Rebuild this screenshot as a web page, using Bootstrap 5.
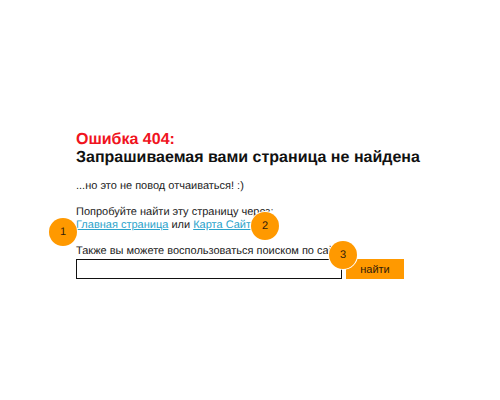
<!DOCTYPE html>
<html lang="ru">
<head>
<meta charset="utf-8">
<meta name="viewport" content="width=device-width, initial-scale=1">
<title>Ошибка 404</title>
<link rel="stylesheet" href="https://cdn.jsdelivr.net/npm/bootstrap@5.3.0/dist/css/bootstrap.min.css">
<style>
  body { font-family: "Liberation Sans", Arial, sans-serif; font-size: 11px; line-height: 13px; color: #1a1a1a; background: #fff; text-rendering: geometricPrecision; }
  .error-page { padding: 131px 48px 48px 76px; }
  .error-title { font-size: 16px; line-height: 18px; font-weight: 700; color: #111; margin-bottom: 13px; }
  .error-code { color: #f0141e; }
  .error-page p { margin-bottom: 13px; }
  .error-page a { color: #2ba3cb; }
  .search-label { margin-bottom: 1px; }
  .search-row { gap: 4px; }
  .search-row .form-control { height: 20px; padding: 0 4px; font-size: 11px; border: 1px solid #111; }
  .search-row .btn { width: 58px; height: 20px; padding: 0; font-size: 11px; line-height: 18px; color: #33200a; background: #ff9900; border: 0; }
  .marker { width: 28px; height: 28px; background: #ff9900; color: #33200a; box-shadow: 0 0 0 1px #fff; z-index: 5; }
  .marker-home { top: -1px; left: -27px; }
  .marker-map { top: -7px; right: -22px; }
  .marker-search { bottom: 10px; right: 47px; }
</style>
</head>
<body>
<main class="error-page">
  <h1 class="error-title"><span class="error-code d-block">Ошибка 404:</span>Запрашиваемая вами страница не найдена</h1>
  <p>...но это не повод отчаиваться! :)</p>
  <p>Попробуйте найти эту страницу через:<br>
    <span class="d-inline-block position-relative"><a href="#home">Главная страница</a><span class="marker marker-home position-absolute rounded-circle d-flex align-items-center justify-content-center">1</span></span>
    или
    <span class="d-inline-block position-relative"><a href="#map">Карта Сайта</a><span class="marker marker-map position-absolute rounded-circle d-flex align-items-center justify-content-center">2</span></span>
  </p>
  <form class="position-relative me-5" onsubmit="return false">
    <label for="query" class="search-label d-block">Также вы можете воспользоваться поиском по сайту</label>
    <div class="search-row d-flex">
      <input id="query" type="text" class="form-control rounded-0 shadow-none">
      <button type="submit" class="btn rounded-0 flex-shrink-0">найти</button>
    </div>
    <span class="marker marker-search position-absolute rounded-circle d-flex align-items-center justify-content-center">3</span>
  </form>
</main>
<script src="https://cdn.jsdelivr.net/npm/bootstrap@5.3.0/dist/js/bootstrap.bundle.min.js"></script>
</body>
</html>
